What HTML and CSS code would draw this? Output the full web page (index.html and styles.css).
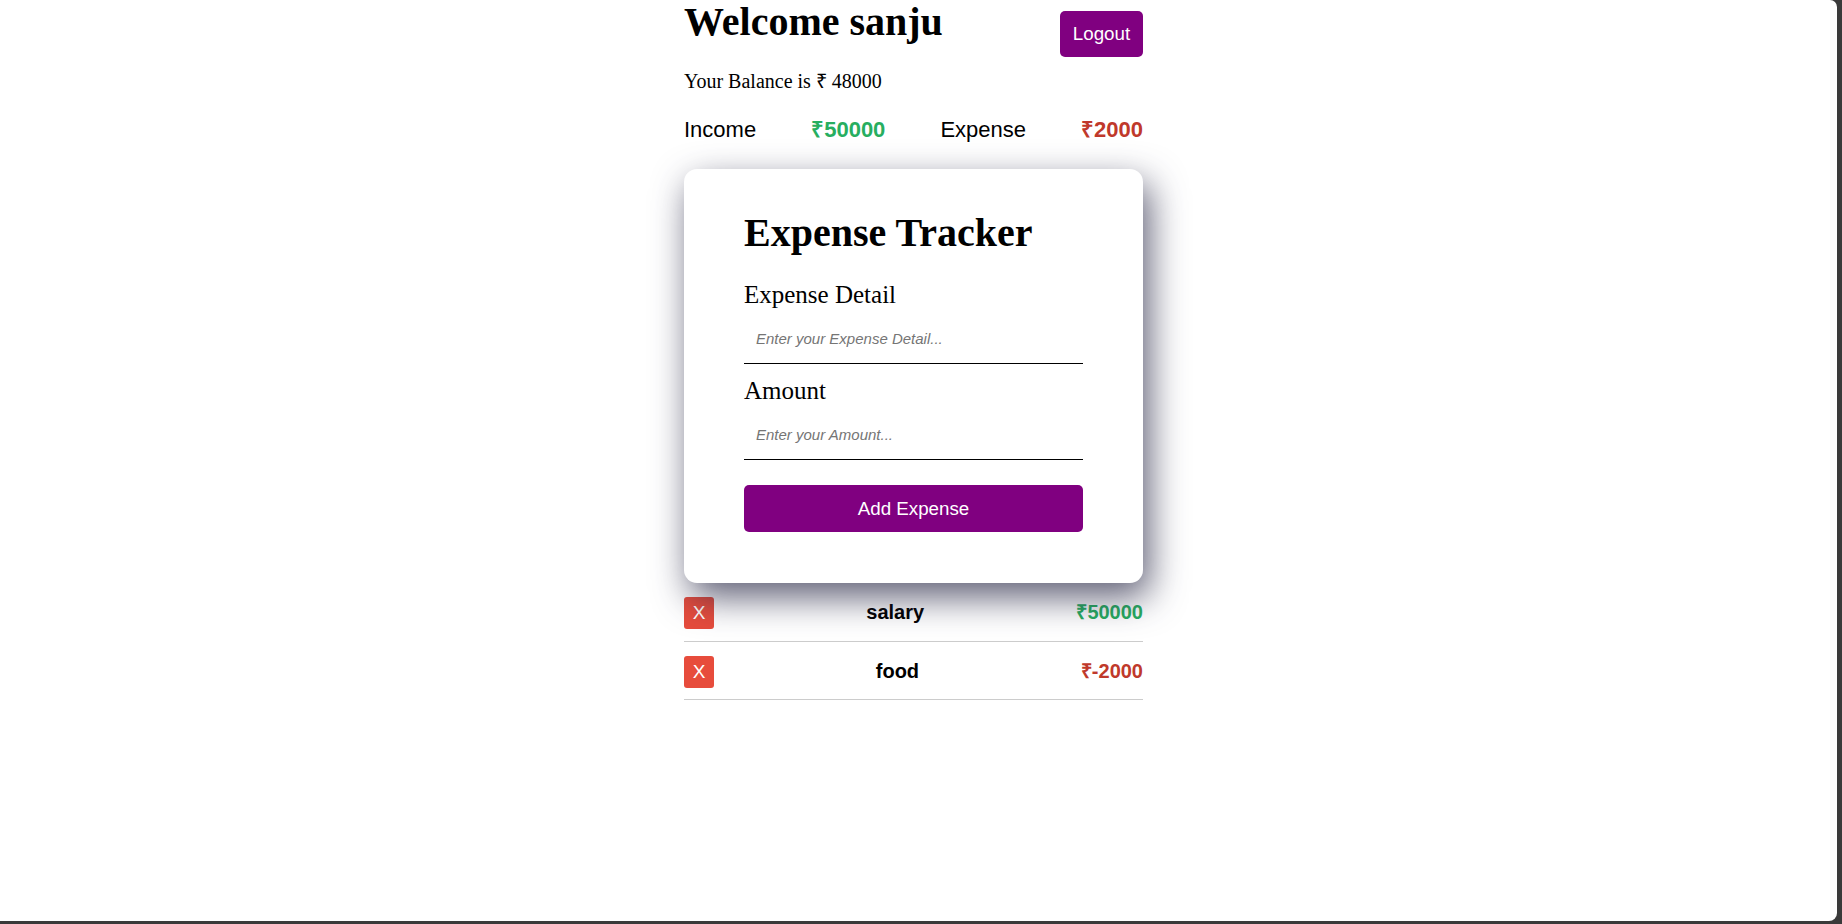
FILE: index.html
```html
<!DOCTYPE html>
<html lang="en">
<head>
<meta charset="utf-8">
<title>Expense Tracker</title>
<link rel="stylesheet" href="styles.css">
</head>
<body>
<div class="screen">
  <main class="app">
    <header class="top">
      <h1 class="welcome">Welcome sanju</h1>
      <button class="logout" type="button">Logout</button>
    </header>
    <p class="balance">Your Balance is ₹ 48000</p>
    <div class="summary">
      <span class="sum-label">Income</span>
      <span class="sum-value income">₹50000</span>
      <span class="sum-label">Expense</span>
      <span class="sum-value expense">₹2000</span>
    </div>
    <form class="card">
      <h1 class="card-title">Expense Tracker</h1>
      <div class="field">
        <label class="field-label" for="detail">Expense Detail</label>
        <input class="field-input" id="detail" type="text" placeholder="Enter your Expense Detail...">
      </div>
      <div class="field">
        <label class="field-label" for="amount">Amount</label>
        <input class="field-input" id="amount" type="text" placeholder="Enter your Amount...">
      </div>
      <button class="add" type="button">Add Expense</button>
    </form>
    <ul class="list">
      <li class="row">
        <button class="del" type="button">X</button>
        <span class="row-name">salary</span>
        <span class="row-amt income">₹50000</span>
      </li>
      <li class="row">
        <button class="del" type="button">X</button>
        <span class="row-name">food</span>
        <span class="row-amt expense">₹-2000</span>
      </li>
    </ul>
  </main>
</div>
</body>
</html>
```
FILE: styles.css
```css
html, body {
  margin: 0;
  padding: 0;
}
body {
  background: #3a3a3a;
  width: 1842px;
  height: 924px;
  overflow: hidden;
}
.screen {
  box-sizing: border-box;
  width: 1837px;
  height: 921px;
  background: #ffffff;
  border-radius: 0 7px 8px 0;
  padding-right: 10px;
  display: flex;
  justify-content: center;
  align-items: flex-start;
  font-family: "Liberation Serif", "Times New Roman", serif;
  color: #000;
}
.app {
  width: 459px;
  display: flex;
  flex-direction: column;
}
.top {
  display: flex;
  justify-content: space-between;
  align-items: flex-start;
}
.welcome {
  margin: 0;
  font-size: 40px;
  line-height: 44px;
  font-weight: 700;
}
.logout {
  margin-top: 11px;
  height: 46px;
  width: 83px;
  padding: 0;
  border: none;
  border-radius: 5px;
  background: #800080;
  color: #fff;
  font-family: "Liberation Sans", Arial, sans-serif;
  font-size: 18.75px;
  line-height: 46px;
}
.balance {
  margin: 12.5px 0 0;
  font-size: 20px;
  line-height: 23px;
}
.summary {
  margin-top: 24.5px;
  display: flex;
  justify-content: space-between;
  font-family: "Liberation Sans", Arial, sans-serif;
  font-size: 22px;
  line-height: 26px;
}
.sum-value {
  font-weight: 700;
}
.income {
  color: #27ae60;
}
.expense {
  color: #c0392b;
}
.card {
  margin-top: 26px;
  padding: 42px 60px 51px;
  background: #fff;
  border-radius: 13px;
  box-shadow: 6px 14px 36px rgba(40, 40, 70, 0.75);
  display: flex;
  flex-direction: column;
  position: relative;
  z-index: 1;
}
.card-title {
  margin: 0 0 26px;
  font-size: 40px;
  line-height: 44px;
  font-weight: 700;
}
.field {
  display: flex;
  flex-direction: column;
  margin-bottom: 13.5px;
}
.field + .field {
  margin-bottom: 25.5px;
}
.field-label {
  font-size: 25px;
  line-height: 28px;
}
.field-input {
  margin-top: 8.5px;
  box-sizing: border-box;
  width: 100%;
  height: 46px;
  padding: 0 12px 3px;
  border: none;
  border-bottom: 1px solid #000;
  outline: none;
  background: transparent;
  font-family: "Liberation Sans", Arial, sans-serif;
  font-size: 15px;
}
.field-input::placeholder {
  font-style: italic;
  color: #757575;
}
.add {
  height: 47px;
  border: none;
  border-radius: 5px;
  background: #800080;
  color: #fff;
  font-family: "Liberation Sans", Arial, sans-serif;
  font-size: 18.75px;
}
.list {
  list-style: none;
  margin: 0;
  padding: 0;
}
.row {
  display: flex;
  justify-content: space-between;
  align-items: center;
  padding: 14px 0 11.5px;
  border-bottom: 1px solid #cccccc;
  font-family: "Liberation Sans", Arial, sans-serif;
  font-size: 20px;
  font-weight: 700;
  line-height: 30px;
}
.del {
  width: 30px;
  height: 32px;
  padding: 0;
  border: none;
  border-radius: 3px;
  background: #e74c3c;
  color: #fff;
  font-family: "Liberation Sans", Arial, sans-serif;
  font-size: 19px;
  font-weight: 400;
  line-height: 32px;
}
.row-name, .row-amt {
  position: relative;
  top: -1px;
}
.row-name {
  color: #000;
}
```
